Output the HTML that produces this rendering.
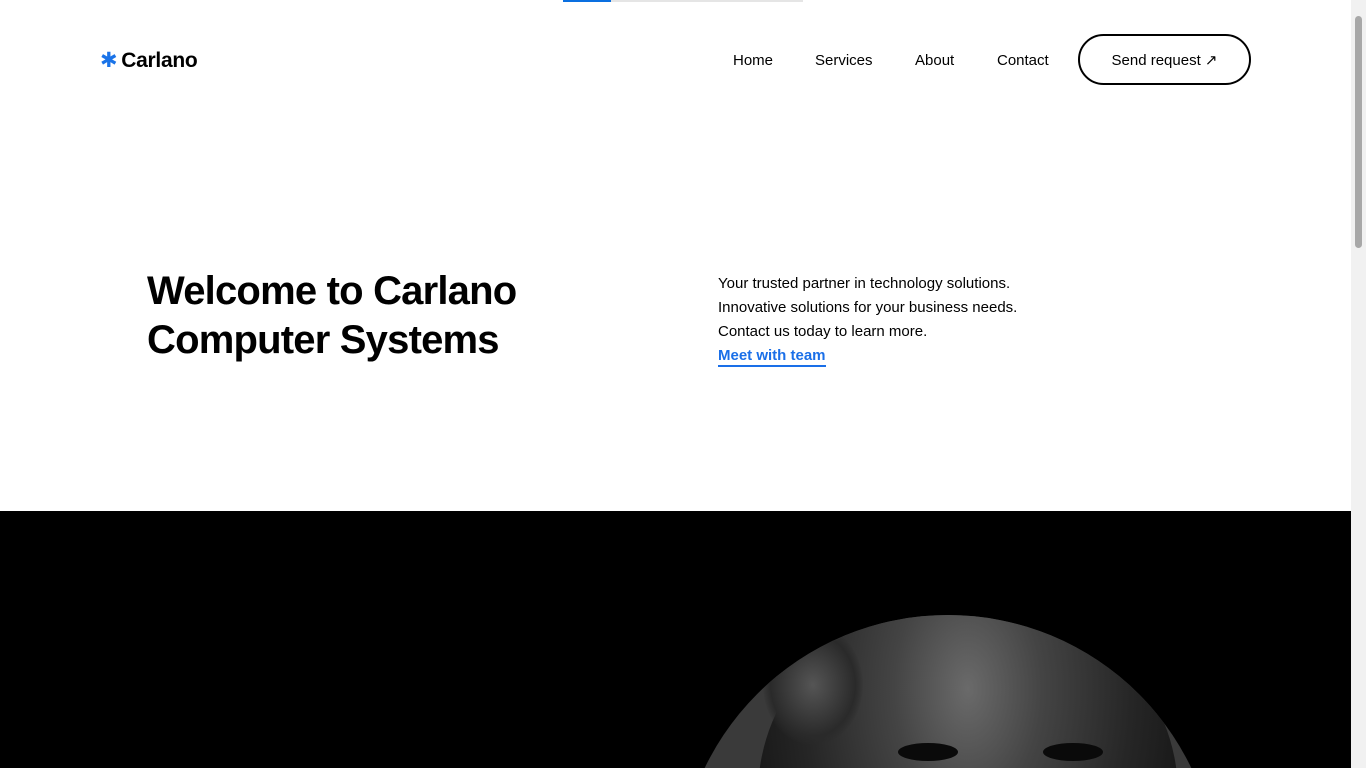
<!DOCTYPE html>
<html><head><meta charset="utf-8"><style>
*{margin:0;padding:0;box-sizing:border-box}
html,body{width:1366px;height:768px;overflow:hidden}
body{background:#fff;font-family:"Liberation Sans",sans-serif;color:#000;position:relative}
.bar{position:absolute;top:0;left:563px;width:240px;height:2px;background:#e5e5e5}
.bar i{display:block;width:48px;height:2px;background:#0a6fe0}
.logo{position:absolute;left:100px;top:48px;font-size:21px;font-weight:bold;letter-spacing:-0.3px}
.logo span{color:#1a73e8;font-weight:normal;margin-right:4px}
.nav a{position:absolute;top:52px;font-size:15px;color:#000;text-decoration:none}
.btn{position:absolute;left:1078px;top:34px;width:173px;height:51px;border:2px solid #000;border-radius:26px;font-size:15px;text-align:center;line-height:49px}
h1{position:absolute;left:147px;top:267px;font-size:40px;line-height:49px;font-weight:bold;letter-spacing:-0.8px}
.txt{position:absolute;left:718px;top:272px;font-size:15px;line-height:24px}
.txt a{color:#1a6fe8;font-weight:bold;text-decoration:none;border-bottom:2px solid #1a6fe8;display:inline-block;line-height:18px}
.dark{position:absolute;left:0;top:511px;width:1351px;height:257px;background:#000;overflow:hidden}
.circ{position:absolute;left:678px;top:104px;width:540px;height:540px;border-radius:50%;background:#3a3a3a;overflow:hidden}
.face{position:absolute;left:80px;top:-10px;width:420px;height:420px;border-radius:45%;background:radial-gradient(ellipse at 50% 20%,#6a6a6a 0%,#444 25%,#262626 55%,#141414 80%)}
.hair{position:absolute;left:5px;top:20px;width:100px;height:120px;border-radius:50%;background:radial-gradient(#555,#2a2a2a 60%,transparent 72%)}
.eye{position:absolute;top:138px;width:60px;height:18px;border-radius:50%;background:#0a0a0a}
.sb{position:absolute;right:0;top:0;width:15px;height:768px;background:#f1f1f1}
.sb i{position:absolute;left:4px;top:16px;width:7px;height:232px;background:#a8a8a8;border-radius:4px}
</style></head><body>
<div class="bar"><i></i></div>
<div class="logo"><span>✱</span>Carlano</div>
<div class="nav"><a style="left:733px">Home</a><a style="left:815px">Services</a><a style="left:915px">About</a><a style="left:997px">Contact</a></div>
<div class="btn">Send request ↗</div>
<h1>Welcome to Carlano<br>Computer Systems</h1>
<div class="txt">Your trusted partner in technology solutions.<br>Innovative solutions for your business needs.<br>Contact us today to learn more.<br><a>Meet with team</a></div>
<div class="dark"><div class="circ"><div class="face"><div class="hair"></div><div class="eye" style="left:140px"></div><div class="eye" style="left:285px"></div></div></div></div>
<div class="sb"><i></i></div>
</body></html>
